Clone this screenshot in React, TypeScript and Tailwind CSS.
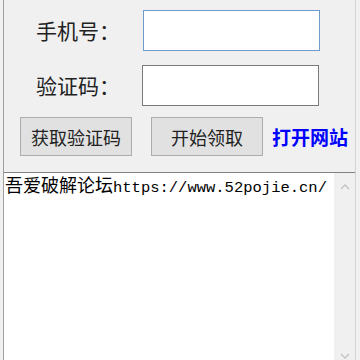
const cjk = { fontFamily: '"Noto Sans CJK SC", sans-serif' };

export default function App() {
  return (
    <div className="w-[360px] h-[360px] bg-[#f0f0f0] flex overflow-hidden">
      <div className="w-[3px] shrink-0" />
      <div
        className="w-[353px] h-full flex flex-col border-l border-r border-l-[#a0a0a0] border-r-[#d4d4d4]"
        style={cjk}
      >
        {/* phone */}
        <div className="mt-[10px] h-[41px] flex items-center">
          <span className="ml-[32px] w-[107px] text-[21px] leading-none text-[#222]">手机号：</span>
          <div className="w-[177px] h-[41px] bg-white border border-[#6e9bcb]" />
        </div>

        {/* code */}
        <div className="mt-[14px] h-[41px] flex items-center">
          <span className="ml-[32px] w-[106px] text-[21px] leading-none text-[#222]">验证码：</span>
          <div className="w-[177px] h-[41px] bg-white border border-[#7a7a7a]" />
        </div>

        {/* actions */}
        <div className="mt-[11px] h-[39px] flex items-center">
          <button className="ml-[16px] w-[112px] h-[39px] bg-[#e1e1e1] border border-[#adadad] text-[18px] text-[#222] leading-none">
            获取验证码
          </button>
          <button className="ml-[19px] w-[112px] h-[39px] bg-[#e1e1e1] border border-[#adadad] text-[18px] text-[#222] leading-none">
            开始领取
          </button>
          <span className="ml-[9px] text-[19px] font-bold text-[#0000ff] leading-none">打开网站</span>
        </div>

        {/* log */}
        <div className="mt-[16px] flex-1 flex bg-white border-t border-[#828282]">
          <div className="flex-1 pl-[1px] text-[18px] leading-[22px] text-black whitespace-nowrap">
            吾爱破解论坛
            <span className="text-[15.5px]" style={{ fontFamily: '"Liberation Mono", monospace' }}>
              https://www.52pojie.cn/
            </span>
          </div>
          <div className="w-[21px] bg-[#f0f0f0] flex flex-col items-center justify-between pt-[11px] pb-[1px]">
            <svg width="10" height="6" viewBox="0 0 10 6">
              <path d="M1 5 L5 1 L9 5" fill="none" stroke="#c2c2c2" strokeWidth="1.3" />
            </svg>
            <svg width="10" height="6" viewBox="0 0 10 6">
              <path d="M1 1 L5 5 L9 1" fill="none" stroke="#c2c2c2" strokeWidth="1.3" />
            </svg>
          </div>
        </div>
      </div>
    </div>
  );
}
